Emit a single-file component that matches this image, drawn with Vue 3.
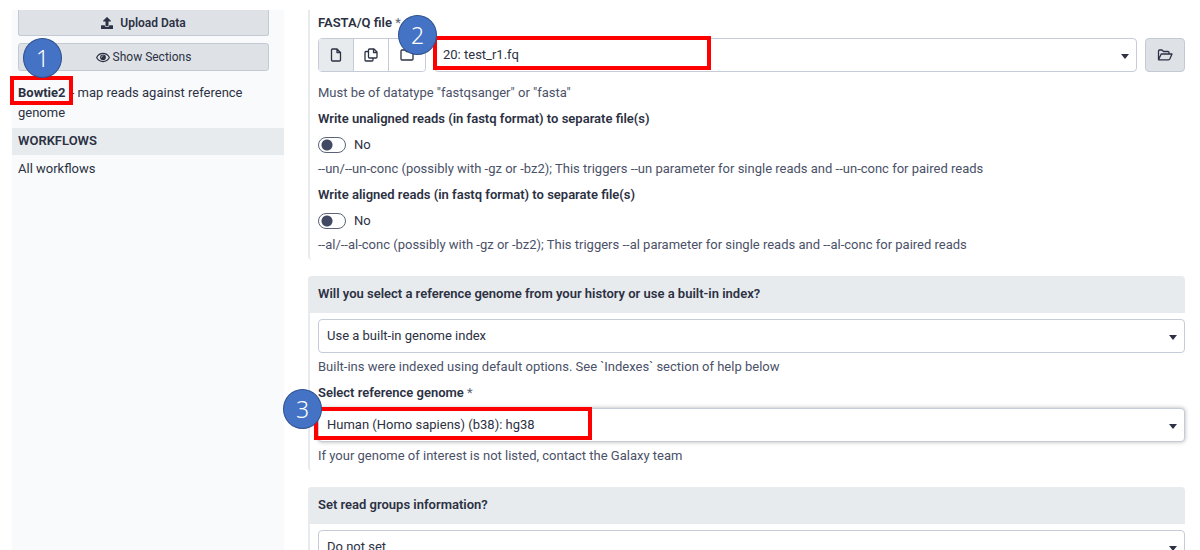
<template>
  <div class="page">
    <aside class="sidebar">
      <div class="sidebar__actions">
        <button class="side-btn side-btn--upload" type="button">
          <svg class="icon" viewBox="0 0 512 512" width="12" height="12" aria-hidden="true">
            <path fill="currentColor" d="M296 384h-80c-13 0-24-11-24-24V192h-88c-18 0-27-21-14-34L242 6c8-8 20-8 28 0l152 152c13 13 4 34-14 34h-88v168c0 13-11 24-24 24zm216-8v112c0 13-11 24-24 24H24c-13 0-24-11-24-24V376c0-13 11-24 24-24h136v8c0 31 25 56 56 56h80c31 0 56-25 56-56v-8h136c13 0 24 11 24 24z" />
          </svg>
          <span>Upload Data</span>
        </button>
        <div class="anchor">
          <button class="side-btn" type="button">
            <svg class="icon" viewBox="0 0 576 448" width="14" height="11" aria-hidden="true">
              <path fill="none" stroke="currentColor" stroke-width="48" d="M26 224C86 112 180 56 288 56s202 56 262 168c-60 112-154 168-262 168S86 336 26 224z" />
              <circle fill="currentColor" cx="288" cy="218" r="118" />
              <path fill="none" stroke="#dee2e6" stroke-width="30" stroke-linecap="round" d="M226 214c0-34 26-60 60-60" />
            </svg>
            <span>Show Sections</span>
          </button>
          <span class="step step--one">1</span>
        </div>
      </div>
      <p class="tool">
        <a class="tool__link" href="#"><strong class="tool__name">Bowtie2<span class="mark mark--tool"></span></strong> - map reads against reference genome</a>
      </p>
      <h2 class="sidebar__heading">WORKFLOWS</h2>
      <a class="sidebar__link" href="#">All workflows</a>
    </aside>

    <main class="main">
      <section class="card card--first">
        <div class="card__body">
          <label class="label" for="fasta">FASTA/Q file <span class="required">*</span></label>
          <div class="file-row">
            <div class="btn-group">
              <button class="btn-group__item btn-group__item--active" type="button" aria-label="Single dataset">
                <svg class="icon" viewBox="0 0 12 14" width="12" height="14">
                  <path fill="none" stroke="currentColor" stroke-width="1.3" stroke-linejoin="round" d="M2.5 1H7l3.500 3.500V12q0 1-1 1h-7q-1 0-1-1V2q0-1 1-1M7 1v3.500h3.500" />
                </svg>
              </button>
              <button class="btn-group__item" type="button" aria-label="Multiple datasets">
                <svg class="icon" viewBox="0 0 14 14" width="14" height="14">
                  <path fill="none" stroke="currentColor" stroke-width="1.3" stroke-linejoin="round" d="M5.500 1H10l3 3v5q0 1-1 1H5.500q-1 0-1-1V2q0-1 1-1M9.500 1v3.500H13M4.500 3.500H2q-1 0-1 1V12q0 1 1 1h6q1 0 1-1v-2" />
                </svg>
              </button>
              <button class="btn-group__item" type="button" aria-label="Dataset collection">
                <svg class="icon" viewBox="0 0 14 12" width="14" height="12">
                  <path fill="none" stroke="currentColor" stroke-width="1.3" stroke-linejoin="round" d="M1 2q0-1 1-1h3l1.500 1.500H12q1 0 1 1V10q0 1-1 1H2q-1 0-1-1z" />
                </svg>
              </button>
              <span class="step step--two">2</span>
            </div>
            <div class="select">
              <select id="fasta" class="select__control">
                <option>20: test_r1.fq</option>
              </select>
              <span class="mark mark--file"></span>
            </div>
            <button class="browse" type="button" aria-label="Browse datasets">
              <svg class="icon" viewBox="0 0 16 12" width="16" height="12">
                <path fill="none" stroke="currentColor" stroke-width="1.3" stroke-linejoin="round" d="M1.500 10.500V2q0-1 1-1H5l1.500 1.500H11q1 0 1 1V5M1.500 10.800 4.200 5H15l-2.200 5q-.4.800-1.200.8z" />
              </svg>
            </button>
          </div>
          <p class="help help--file">Must be of datatype "fastqsanger" or "fasta"</p>

          <template v-for="t in toggles" :key="t.id">
            <span class="label label--toggle">{{ t.title }}</span>
            <label class="switch" :for="t.id">
              <input :id="t.id" v-model="t.value" class="switch__input" type="checkbox" />
              <span>{{ t.value ? 'Yes' : 'No' }}</span>
            </label>
            <p class="help">{{ t.help }}</p>
          </template>
        </div>
      </section>

      <section class="card">
        <label class="card__header" for="source">Will you select a reference genome from your history or use a built-in index?</label>
        <div class="card__body">
          <div class="select">
            <select id="source" class="select__control">
              <option>Use a built-in genome index</option>
            </select>
          </div>
          <p class="help">Built-ins were indexed using default options. See `Indexes` section of help below</p>
          <label class="label" for="genome">Select reference genome <span class="required">*</span></label>
          <div class="select">
            <select id="genome" class="select__control select__control--hover">
              <option>Human (Homo sapiens) (b38): hg38</option>
            </select>
            <span class="mark mark--genome"></span>
            <span class="step step--three">3</span>
          </div>
          <p class="help">If your genome of interest is not listed, contact the Galaxy team</p>
        </div>
      </section>

      <section class="card">
        <label class="card__header" for="groups">Set read groups information?</label>
        <div class="card__body">
          <div class="select">
            <select id="groups" class="select__control">
              <option>Do not set</option>
            </select>
          </div>
        </div>
      </section>
    </main>
  </div>
</template>

<script setup>
import { ref } from 'vue'

const toggles = ref([
  {
    id: 'unaligned',
    title: 'Write unaligned reads (in fastq format) to separate file(s)',
    help: '--un/--un-conc (possibly with -gz or -bz2); This triggers --un parameter for single reads and --un-conc for paired reads',
    value: false,
  },
  {
    id: 'aligned',
    title: 'Write aligned reads (in fastq format) to separate file(s)',
    help: '--al/--al-conc (possibly with -gz or -bz2); This triggers --al parameter for single reads and --al-conc for paired reads',
    value: false,
  },
])
</script>

<style>
body {
  margin: 0;
  background: #fff;
}
</style>

<style scoped>
.page {
  box-sizing: border-box;
  display: flex;
  height: 100vh;
  padding: 10px 15px 0 12px;
  overflow: hidden;
  font-family: Roboto, "Liberation Sans", sans-serif;
  font-size: 13px;
  line-height: 20px;
  color: #2c3143;
}
.icon {
  display: block;
  flex: none;
}

.sidebar {
  flex: 0 0 272px;
  background: #f8fafc;
}
.sidebar__actions {
  display: flex;
  flex-direction: column;
  gap: 7px;
  padding: 0 15px 0 6px;
}
.anchor { position: relative; }
.side-btn {
  box-sizing: border-box;
  display: flex;
  align-items: center;
  justify-content: center;
  gap: 3px;
  width: 100%;
  height: 28px;
  padding: 0;
  border: 1px solid #c3cad3;
  border-radius: 3px;
  background: #dee2e6;
  color: inherit;
  font: inherit;
  font-size: 12px;
}
.side-btn--upload {
  gap: 7px;
  height: 26px;
  border-top: 0;
  border-radius: 0 0 3px 3px;
  font-weight: 600;
}
.tool {
  margin: 0;
  padding: 12px 20px 5px 6px;
}
.tool__link {
  color: inherit;
  text-decoration: none;
}
.tool__name {
  position: relative;
  margin-right: 2px;
}
.sidebar__heading {
  margin: 0;
  padding: 3px 6px 4px;
  background: #e7ebee;
  font-size: 13px;
  font-weight: 600;
}
.sidebar__link {
  display: block;
  padding: 4px 6px;
  color: inherit;
  text-decoration: none;
}

.main {
  flex: 1;
  min-width: 0;
  padding-left: 24px;
}
.card {
  margin-bottom: 16px;
  border-left: 2px solid #e7ebee;
  border-radius: 4px;
}
.card--first { border-top-left-radius: 0; }
.card__header {
  display: block;
  margin-left: -2px;
  padding: 8px 10px 9px;
  border-radius: 4px 4px 0 0;
  background: #e7ebee;
  font-weight: 600;
}
.card__body { padding: 6px 0 5px 8px; }
.card--first .card__body { padding-top: 3px; }
.label {
  display: block;
  margin-bottom: 5px;
  font-weight: 600;
}
.label--toggle { margin-bottom: 6px; }
.required {
  color: #5b6477;
  font-weight: 400;
}
.help {
  margin: 4px 0 6px;
  color: #4a5168;
}
.help--file { margin: 11px 0 6px; }
.switch + .help { margin-bottom: 6px; }
.help:last-child,
.switch + .help:last-child { margin-bottom: 0; }

.file-row {
  display: flex;
  gap: 8px;
}
.btn-group {
  position: relative;
  display: flex;
  border: 1px solid #c5ccd8;
  border-radius: 4px;
}
.btn-group__item {
  display: flex;
  align-items: center;
  justify-content: center;
  width: 35px;
  padding: 0;
  border: 0;
  border-right: 1px solid #c5ccd8;
  background: #fff;
  color: inherit;
}
.btn-group__item--active { background: #e7ebee; }
.btn-group__item:nth-child(3) {
  width: 36px;
  border-right: 0;
  border-radius: 4px;
}
.browse {
  display: flex;
  align-items: center;
  justify-content: center;
  width: 40px;
  padding: 0;
  border: 1px solid #c3cad3;
  border-radius: 4px;
  background: #dee2e6;
  color: inherit;
}

.select {
  position: relative;
  flex: 1;
}
.select::after {
  content: "";
  position: absolute;
  right: 8px;
  top: 16px;
  border: 4px solid transparent;
  border-top: 5px solid #2c3143;
  border-bottom: 0;
}
.select__control {
  display: block;
  box-sizing: border-box;
  width: 100%;
  height: 34px;
  padding: 0 24px 0 8px;
  border: 1px solid #c5ccd8;
  border-radius: 4px;
  appearance: none;
  background: #fff;
  color: inherit;
  font: inherit;
}
.select__control--hover { box-shadow: 0 0 4px rgba(0, 0, 0, .3); }

.switch {
  display: flex;
  align-items: center;
  gap: 8px;
}
.switch__input {
  box-sizing: border-box;
  width: 28px;
  height: 16px;
  margin: 0;
  border: 1px solid #5b6477;
  border-radius: 8px;
  appearance: none;
  background: radial-gradient(circle at 8px 7px, #414963 5px, #fff 6px);
}

/* numbered walkthrough markers */
.step {
  box-sizing: border-box;
  position: absolute;
  z-index: 2;
  width: 39px;
  height: 40px;
  border: 1px solid #2f528f;
  border-radius: 50%;
  background: #4472c4;
  color: #fff;
  font-family: "Noto Sans", sans-serif;
  font-size: 23px;
  font-weight: 300;
  line-height: 38px;
  text-align: center;
}
.step--one { left: 5px; top: -5px; }
.step--two { left: 79px; top: -24px; }
.step--three { left: -35px; top: -19px; }
.mark {
  box-sizing: border-box;
  position: absolute;
  z-index: 1;
  width: 278px;
  border: 4px solid #f00;
  pointer-events: none;
}
.mark--tool {
  left: -8px;
  top: -9px;
  width: 63px;
  height: 29px;
}
.mark--file { left: -1px; top: -2px; height: 34px; }
.mark--genome { left: -4px; top: -1px; height: 33px; }
</style>
